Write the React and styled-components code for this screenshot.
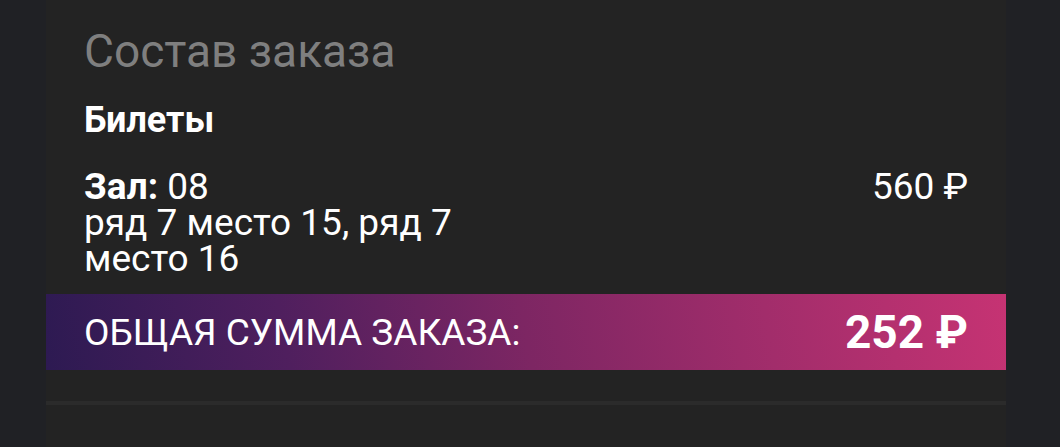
import React from "react";
import styled, { createGlobalStyle } from "styled-components";

const Global = createGlobalStyle`
  html, body {
    margin: 0;
    padding: 0;
    background: #202125;
  }
  body {
    font-family: Roboto, "Noto Sans", "Liberation Sans", sans-serif;
    color: #ffffff;
  }
`;

const Page = styled.div`
  display: flex;
  padding-left: 46px;
  height: 447px;
  overflow: hidden;
`;

const Panel = styled.section`
  width: 960px;
  background: #232323;
  display: flex;
  flex-direction: column;
  padding-top: 24px;
  min-height: 100%;
`;

const Inner = styled.div`
  padding: 0 38px;
  display: flex;
  flex-direction: column;
`;

const Title = styled.h2`
  margin: 0;
  font-size: 46px;
  line-height: 54px;
  font-weight: 400;
  color: #7f7f7f;
`;

const Section = styled.h3`
  margin: 21px 0 0;
  font-size: 36px;
  line-height: 42px;
  font-weight: 700;
  color: #ffffff;
`;

const Row = styled.div`
  display: flex;
  justify-content: space-between;
  align-items: flex-start;
  margin-top: 28px;
`;

const Info = styled.div`
  max-width: 420px;
  font-size: 37px;
  line-height: 36px;
  font-weight: 400;
`;

const Label = styled.b`
  font-weight: 700;
`;

const Price = styled.div`
  font-size: 37px;
  line-height: 36px;
  white-space: nowrap;
`;

const TotalBar = styled.div`
  margin-top: 17px;
  height: 76px;
  padding: 0 38px;
  display: flex;
  align-items: center;
  justify-content: space-between;
  background: linear-gradient(
    80deg,
    #2d1a52 0%,
    #4f1f5e 25%,
    #7d2663 50%,
    #a22d6b 75%,
    #c63373 100%
  );
`;

const TotalLabel = styled.span`
  font-size: 37px;
  text-transform: uppercase;
`;

const TotalValue = styled.span`
  font-size: 46px;
  font-weight: 700;
`;

const Divider = styled.hr`
  margin: 31px 0 0;
  border: 0;
  height: 4px;
  background: #2b2b2b;
`;

export default function App() {
  return (
    <>
      <Global />
      <Page>
        <Panel>
          <Inner>
            <Title>Состав заказа</Title>
            <Section>Билеты</Section>
            <Row>
              <Info>
                <Label>Зал:</Label> 08
                <br />
                ряд 7 место 15, ряд 7 место 16
              </Info>
              <Price>560 ₽</Price>
            </Row>
          </Inner>
          <TotalBar>
            <TotalLabel>Общая сумма заказа:</TotalLabel>
            <TotalValue>252 ₽</TotalValue>
          </TotalBar>
          <Divider />
        </Panel>
      </Page>
    </>
  );
}
